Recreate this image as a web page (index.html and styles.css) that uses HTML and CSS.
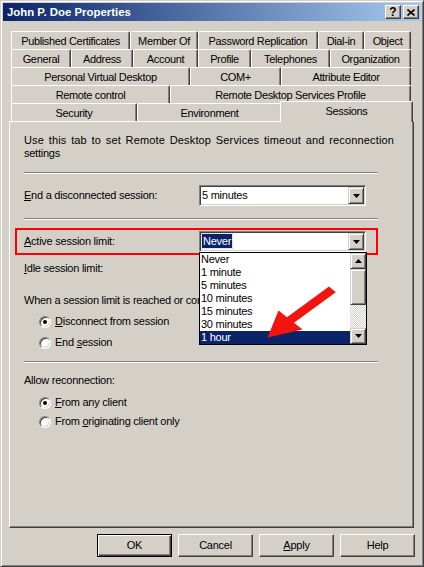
FILE: index.html
```html
<!DOCTYPE html>
<html>
<head>
<meta charset="utf-8">
<title>John P. Doe Properties</title>
<link rel="stylesheet" href="styles.css">
</head>
<body>
<div class="window">
  <div class="titlebar">
    <span class="title">John P. Doe Properties</span>
    <div class="tbtns">
      <span class="tbtn">?</span>
      <span class="tbtn"><svg width="8" height="7" viewBox="0 0 8 7"><path d="M0.5 0.5 L7.5 6.5 M7.5 0.5 L0.5 6.5" stroke="#000" stroke-width="1.6"/></svg></span>
    </div>
  </div>

  <div class="tabstrip">
    <div class="tabrow r1">
      <span class="tab">Published Certificates</span><span class="tab">Member Of</span><span class="tab">Password Replication</span><span class="tab">Dial-in</span><span class="tab">Object</span>
    </div>
    <div class="tabrow r2">
      <span class="tab">General</span><span class="tab">Address</span><span class="tab">Account</span><span class="tab">Profile</span><span class="tab">Telephones</span><span class="tab">Organization</span>
    </div>
    <div class="tabrow r3">
      <span class="tab">Personal Virtual Desktop</span><span class="tab">COM+</span><span class="tab">Attribute Editor</span>
    </div>
    <div class="tabrow r4">
      <span class="tab">Remote control</span><span class="tab">Remote Desktop Services Profile</span>
    </div>
    <div class="tabrow r5">
      <span class="tab">Security</span><span class="tab">Environment</span><span class="tab sel">Sessions</span>
    </div>
  </div>

  <div class="panel">
    <p class="intro"><span class="intro-l1">Use this tab to set Remote Desktop Services timeout and reconnection</span><br>settings</p>
    <div class="sep"></div>
    <div class="field first">
      <span class="label"><u>E</u>nd a disconnected session:</span>
      <div class="combo"><span class="val">5 minutes</span><span class="ddbtn"><svg width="7" height="4" viewBox="0 0 7 4"><path d="M0 0 H7 L3.5 4 Z" fill="#000"/></svg></span></div>
    </div>
    <div class="sep"></div>
    <div class="field redbox">
      <span class="label"><u>A</u>ctive session limit:</span>
      <div class="combo">
        <span class="val"><span class="hl">Never</span></span><span class="ddbtn"><svg width="7" height="4" viewBox="0 0 7 4"><path d="M0 0 H7 L3.5 4 Z" fill="#000"/></svg></span>
        <div class="list">
          <div class="items">
            <div class="item">Never</div>
            <div class="item">1 minute</div>
            <div class="item">5 minutes</div>
            <div class="item">10 minutes</div>
            <div class="item">15 minutes</div>
            <div class="item">30 minutes</div>
            <div class="item cur">1 hour</div>
          </div>
          <div class="scroll">
            <span class="sbtn"><svg width="7" height="4" viewBox="0 0 7 4"><path d="M0 4 H7 L3.5 0 Z" fill="#000"/></svg></span>
            <span class="thumb"></span>
            <span class="track"></span>
            <span class="sbtn"><svg width="7" height="4" viewBox="0 0 7 4"><path d="M0 0 H7 L3.5 4 Z" fill="#000"/></svg></span>
          </div>
        </div>
      </div>
    </div>
    <div class="field idle">
      <span class="label"><u>I</u>dle session limit:</span>
    </div>
    <p class="text when">When a session limit is reached or connection is broken:</p>
    <div class="radio r-first"><span class="dot on"></span><span><u>D</u>isconnect from session</span></div>
    <div class="radio r-second"><span class="dot"></span><span>End <u>s</u>ession</span></div>
    <div class="sep sep3"></div>
    <p class="text allow">Allow reconnection:</p>
    <div class="radio r-third"><span class="dot on"></span><span><u>F</u>rom any client</span></div>
    <div class="radio r-fourth"><span class="dot"></span><span>From <u>o</u>riginating client only</span></div>
  </div>

  <div class="buttons">
    <span class="btn default">OK</span>
    <span class="btn">Cancel</span>
    <span class="btn"><u>A</u>pply</span>
    <span class="btn">Help</span>
  </div>

  <svg class="arrow" width="424" height="567" viewBox="0 0 424 567">
    <polygon points="329,286.4 335.8,292.2 294,322.8 302.5,329.5 267.5,337.5 278.5,310.5 287,317.2" fill="#f4140f"/>
  </svg>
</div>
</body>
</html>
```

FILE: styles.css
```css
* { box-sizing: border-box; }

html, body {
  margin: 0;
  padding: 0;
  background: #d4d0c8;
}

body {
  font-family: "Liberation Sans", Arial, sans-serif;
  font-size: 11px;
  line-height: 13px;
  letter-spacing: -0.25px;
  color: #000;
}

p { margin: 0; }

.window {
  width: 424px;
  height: 567px;
  background: #d4d0c8;
  border: 1px solid;
  border-color: #d4d0c8 #404040 #404040 #d4d0c8;
  box-shadow: inset 1px 1px #fff, inset -1px -1px #808080;
  padding: 2px;
}

/* title bar */
.titlebar {
  height: 18px;
  background: linear-gradient(to right, #0a246a, #a6caf0);
  display: flex;
  align-items: center;
  justify-content: space-between;
  padding: 0 2px 0 4px;
}

.title {
  color: #fff;
  font-weight: bold;
  font-size: 11.4px;
  letter-spacing: 0;
}

.tbtns {
  display: flex;
  gap: 2px;
}

.tbtn {
  width: 16px;
  height: 14px;
  background: #d4d0c8;
  border: 1px solid;
  border-color: #fff #404040 #404040 #fff;
  box-shadow: inset -1px -1px #808080;
  display: flex;
  align-items: center;
  justify-content: center;
  font-weight: bold;
  font-size: 12px;
  line-height: 12px;
  letter-spacing: 0;
}

/* tabs */
.tabstrip {
  width: 405px;
  margin: 10px 0 0 6px;
}

.tabrow {
  display: flex;
  height: 18px;
  padding: 0 2px;
}

.tab {
  flex: 0 0 auto;
  height: 18px;
  border-top: 1px solid #fff;
  border-left: 1px solid #fff;
  border-right: 1px solid #404040;
  border-radius: 2px 2px 0 0;
  box-shadow: inset -1px 0 #808080;
  display: flex;
  justify-content: center;
  align-items: center;
  padding-top: 1px;
  white-space: nowrap;
  letter-spacing: -0.35px;
}

.r1 .tab:nth-child(1) { width: 119px; }
.r1 .tab:nth-child(2) { width: 68px; }
.r1 .tab:nth-child(3) { width: 120px; }
.r1 .tab:nth-child(4) { width: 46px; }
.r1 .tab:nth-child(5) { width: 47px; }

.r2 .tab:nth-child(1) { width: 60px; }
.r2 .tab:nth-child(2) { width: 62px; }
.r2 .tab:nth-child(3) { width: 65px; }
.r2 .tab:nth-child(4) { width: 53px; }
.r2 .tab:nth-child(5) { width: 79px; }
.r2 .tab:nth-child(6) { width: 81px; }

.r3 .tab:nth-child(1) { width: 179px; }
.r3 .tab:nth-child(2) { width: 91px; }
.r3 .tab:nth-child(3) { width: 130px; }

.r4 .tab:nth-child(1) { width: 159px; }
.r4 .tab:nth-child(2) { width: 241px; }

.r5 .tab:nth-child(1) { width: 126px; }
.r5 .tab:nth-child(2) { width: 145px; }
.r5 .tab.sel {
  width: 133px;
  height: 21px;
  margin: -2px -2px 0;
  position: relative;
  z-index: 1;
  background: #d4d0c8;
  align-items: flex-start;
  padding-top: 3px;
}

/* panel */
.panel {
  width: 405px;
  height: 407px;
  margin-left: 6px;
  border: 1px solid;
  border-color: #fff #404040 #404040 #fff;
  box-shadow: inset -1px -1px #808080;
  padding: 12px 14px 0 14px;
}

.intro { white-space: nowrap; }
.intro-l1 {
  letter-spacing: 0.15px;
  word-spacing: 1.5px;
}

.sep {
  width: 354px;
  height: 2px;
  border-top: 1px solid #808080;
  border-bottom: 1px solid #fff;
  margin-top: 12px;
}

.field {
  display: flex;
  align-items: center;
  height: 21px;
}

.field.first { margin-top: 11px; }

.label {
  flex: 0 0 175px;
  white-space: nowrap;
}

.combo {
  position: relative;
  width: 167px;
  height: 21px;
  background: #fff;
  border: 1px solid;
  border-color: #808080 #fff #fff #808080;
  box-shadow: inset 1px 1px #404040, inset -1px -1px #d4d0c8;
  padding: 1px;
  display: flex;
  align-items: center;
}

.val {
  flex: 1;
  padding-left: 1px;
  white-space: nowrap;
}

.hl {
  background: #0a246a;
  color: #fff;
  padding: 1px 1px;
  outline: 1px dotted #d4d0c8;
}

.ddbtn {
  flex: 0 0 16px;
  height: 17px;
  background: #d4d0c8;
  border: 1px solid;
  border-color: #d4d0c8 #404040 #404040 #d4d0c8;
  box-shadow: inset 1px 1px #fff, inset -1px -1px #808080;
  display: flex;
  align-items: center;
  justify-content: center;
}

.redbox {
  height: 27px;
  width: 363px;
  margin: 8px 0 0 -9px;
  border: 2px solid #ff0000;
  padding: 1px 0 1px 7px;
}

.list {
  position: absolute;
  left: -1px;
  top: 20px;
  width: 168px;
  height: 93px;
  border: 1px solid #000;
  background: #fff;
  display: flex;
  z-index: 2;
}

.items {
  flex: 1;
}

.item {
  height: 13px;
  line-height: 13px;
  padding-left: 1px;
  white-space: nowrap;
}

.item.cur {
  background: #0a246a;
  color: #fff;
}

.scroll {
  flex: 0 0 16px;
  display: flex;
  flex-direction: column;
}

.sbtn {
  height: 16px;
  background: #d4d0c8;
  border: 1px solid;
  border-color: #d4d0c8 #404040 #404040 #d4d0c8;
  box-shadow: inset 1px 1px #fff, inset -1px -1px #808080;
  display: flex;
  align-items: center;
  justify-content: center;
}

.thumb {
  height: 36px;
  background: #d4d0c8;
  border: 1px solid;
  border-color: #d4d0c8 #404040 #404040 #d4d0c8;
  box-shadow: inset 1px 1px #fff, inset -1px -1px #808080;
}

.track {
  height: 23px;
  background-color: #d4d0c8;
  background-image: repeating-conic-gradient(#fff 0 25%, #d4d0c8 0 50%);
  background-size: 2px 2px;
}

.idle { margin-top: 3px; }

.text { white-space: nowrap; }
.when {
  margin-top: 15px;
  width: 175px;
  overflow: hidden;
}
.allow { margin-top: 11px; }

.radio {
  display: flex;
  align-items: center;
  gap: 4px;
  height: 13px;
  margin-left: 15px;
  white-space: nowrap;
}

.r-first { margin-top: 8px; }
.r-second { margin-top: 8px; }
.r-third { margin-top: 9px; }
.r-fourth { margin-top: 6px; }

.sep3 { margin-top: 12px; }

.dot {
  position: relative;
  width: 12px;
  height: 12px;
  border-radius: 50%;
  background: #fff;
  border: 1px solid;
  border-color: #808080 #fff #fff #808080;
  box-shadow: inset 1px 1px #404040, inset -1px -1px #d4d0c8;
}

.dot.on::after {
  content: "";
  position: absolute;
  left: 3px;
  top: 3px;
  width: 4px;
  height: 4px;
  border-radius: 50%;
  background: #000;
}

/* buttons */
.buttons {
  display: flex;
  justify-content: flex-end;
  gap: 6px;
  margin-top: 6px;
  padding-right: 6px;
}

.btn {
  width: 75px;
  height: 23px;
  display: flex;
  align-items: center;
  justify-content: center;
  border: 1px solid;
  border-color: #fff #404040 #404040 #fff;
  box-shadow: inset -1px -1px #808080;
}

.btn.default {
  border-color: #000;
  box-shadow: inset 1px 1px #fff, inset -1px -1px #404040, inset -2px -2px #808080;
}

.arrow {
  position: absolute;
  left: 0;
  top: 0;
  pointer-events: none;
  z-index: 5;
}
```
